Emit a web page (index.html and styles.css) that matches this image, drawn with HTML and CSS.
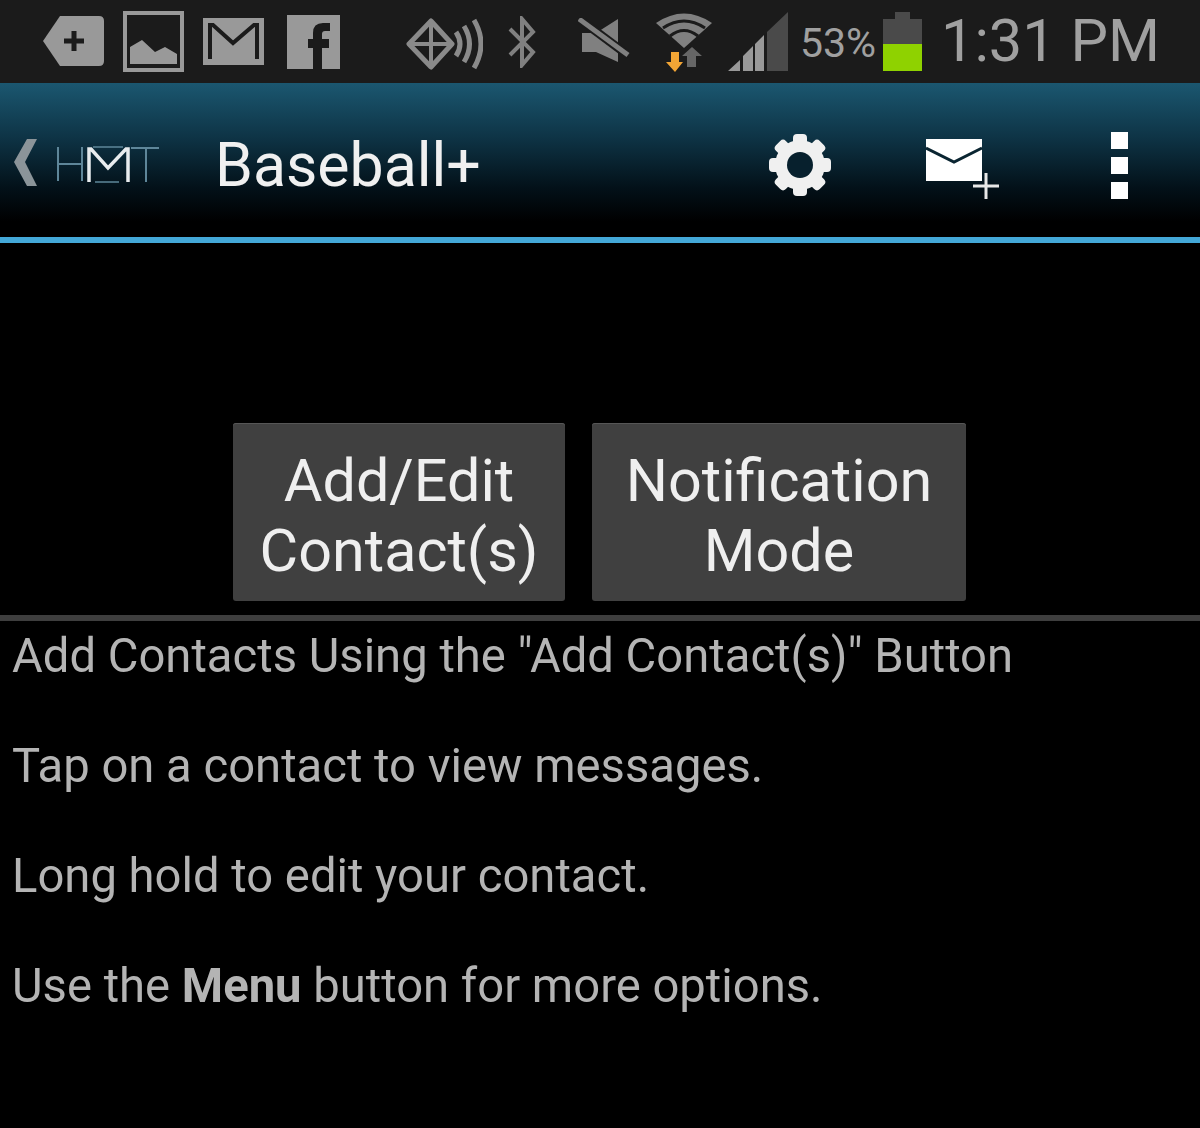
FILE: index.html
```html
<!DOCTYPE html>
<html lang="en">
<head>
  <meta charset="UTF-8" />
  <title>Baseball+</title>
  <link rel="stylesheet" href="styles.css">
</head>
<body>

  <div class="status">
    <svg class="ic-tag" viewBox="0 0 61 51">
      <path d="M17 1H56Q61 1 61 6V46Q61 51 56 51H17L0 26Z" fill="#999"/>
      <path d="M31 16V36M21 26H41" stroke="#1b1b1b" stroke-width="5"/>
    </svg>
    <svg class="ic-pic" viewBox="0 0 61 61">
      <rect x="2" y="2" width="57" height="57" fill="none" stroke="#999" stroke-width="4"/>
      <path d="M7 36L19 29L32 41L42 36L54 43V53H7Z" fill="#999"/>
    </svg>
    <svg class="ic-mail" viewBox="0 0 61 47">
      <rect width="61" height="47" fill="#999"/>
      <path d="M7 41V7H10L30 25L51 7H54V41" fill="none" stroke="#1b1b1b" stroke-width="4"/>
    </svg>
    <svg class="ic-fb" viewBox="0 0 53 54">
      <rect width="53" height="54" fill="#999"/>
      <path d="M26 54V33H21V24H26V18Q26 8 36 8H43V16H38Q35 16 35 19V24H42V33H35V54Z" fill="#1b1b1b"/>
    </svg>
    <svg class="ic-nfc" viewBox="0 0 77 52">
      <path d="M25 3L46 26L25 49L3 26Z" fill="none" stroke="#8a8a8a" stroke-width="5" stroke-linejoin="round"/>
      <path d="M25 3V49M3 26H46" stroke="#8a8a8a" stroke-width="4"/>
      <path d="M50 14Q58 26 50 38M58 8Q69 26 58 44M68 2Q82 26 68 50" fill="none" stroke="#8a8a8a" stroke-width="5"/>
    </svg>
    <svg class="ic-bt" viewBox="0 0 30 52">
      <path d="M3 13L26 36L15 49V3L26 16L3 39" fill="none" stroke="#808080" stroke-width="4"/>
    </svg>
    <svg class="ic-mute" viewBox="0 0 52 44">
      <path d="M4 15H18L40 1V44L18 34H4Z" fill="#808080"/>
      <path d="M0 0L51 38" stroke="#1b1b1b" stroke-width="9"/>
      <path d="M1 1L50 37" stroke="#808080" stroke-width="5"/>
    </svg>
    <svg class="ic-wifi" viewBox="0 0 56 60">
      <path d="M0 11Q28 -8 56 11L28 36Z" fill="#808080"/>
      <path d="M7 16Q28 2 49 16M14 24Q28 13 42 24" fill="none" stroke="#1b1b1b" stroke-width="3"/>
      <path d="M31 55V44H26L36 35L46 44H40V55Z" fill="#666"/>
      <path d="M15 40H23V50H27L19 60L10 50H15Z" fill="#f2a535"/>
    </svg>
    <svg class="ic-signal" viewBox="0 0 60 60">
      <path d="M39 20L60 0V59H39Z" fill="#4a4a4a"/>
      <path d="M0 59L12 48V59ZM15 44L25 34V59H15ZM27 32L36 23V59H27Z" fill="#999"/>
    </svg>
    <span class="pct">53%</span>
    <svg class="ic-batt" viewBox="0 0 39 59">
      <path d="M12 0H27V7H39V32H0V7H12Z" fill="#4a4a4a"/>
      <rect y="32" width="39" height="27" fill="#8fd200"/>
    </svg>
    <span class="clock">1:31 PM</span>
  </div>

  <div class="actionbar">
    <div class="home">
      <svg class="ic-back" viewBox="0 0 24 48">
        <path d="M23 0H13L0 23L13 47H23L11 23Z" fill="#8b9499"/>
      </svg>
      <svg class="logo" viewBox="0 0 103 38">
        <path d="M1 1V35M25 1V35M1 18H25" fill="none" stroke="#5e8699" stroke-width="2"/>
        <path d="M32 36V3H34L51 22L69 3H71V36" fill="none" stroke="#e8ecee" stroke-width="3.5"/>
        <path d="M36 1H66M38 36H62" stroke="#5e8699" stroke-width="1.5"/>
        <path d="M74 2H102M89 2V36" fill="none" stroke="#5e8699" stroke-width="2"/>
      </svg>
    </div>
    <div class="title">Baseball+</div>
    <svg class="ic-gear" viewBox="0 0 64 64">
      <g fill="#f0f0f0">
        <circle cx="32" cy="32" r="25"/>
        <rect x="25" y="1" width="14" height="62" rx="4"/>
        <rect x="25" y="1" width="14" height="62" rx="4" transform="rotate(45 32 32)"/>
        <rect x="25" y="1" width="14" height="62" rx="4" transform="rotate(90 32 32)"/>
        <rect x="25" y="1" width="14" height="62" rx="4" transform="rotate(135 32 32)"/>
      </g>
      <circle cx="32" cy="32" r="13" fill="#07202d"/>
    </svg>
    <svg class="ic-compose" viewBox="0 0 74 62">
      <rect y="1" width="56" height="42" fill="#fff"/>
      <path d="M0 10L28 24L56 10" fill="none" stroke="#0a2531" stroke-width="3"/>
      <path d="M47 48H73M60 35V61" stroke="#e8e8e8" stroke-width="3"/>
    </svg>
    <div class="overflow"><i></i><i></i><i></i></div>
  </div>

  <div class="btnrow">
    <div class="btn btn-add">Add/Edit<br>Contact(s)</div>
    <div class="btn btn-mode">Notification<br>Mode</div>
  </div>
  <div class="divider"></div>

  <div class="help">
    <p>Add Contacts Using the "Add Contact(s)" Button</p>
    <p>Tap on a contact to view messages.</p>
    <p>Long hold to edit your contact.</p>
    <p>Use the <b>Menu</b> button for more options.</p>
  </div>

</body>
</html>
```

FILE: styles.css
```css
body {
  margin: 0;
  background-color: #000;
  font-family: Roboto, sans-serif;
  overflow: hidden;
  filter: blur(0.5px);
}
svg {
  display: block;
  flex: none;
}

.status {
  height: 83px;
  background: #1b1b1b;
  display: flex;
  align-items: center;
  padding-left: 43px;
  color: #a0a0a0;
}
.ic-tag { width: 61px; height: 51px; margin-top: -2px; }
.ic-pic { width: 61px; height: 61px; margin-left: 19px; }
.ic-mail { width: 61px; height: 47px; margin-left: 19px; }
.ic-fb { width: 53px; height: 54px; margin-left: 23px; }
.ic-nfc { width: 77px; height: 52px; margin-left: 66px; margin-top: 5px; }
.ic-bt { width: 30px; height: 52px; margin-left: 24px; }
.ic-mute { width: 52px; height: 44px; margin-left: 41px; margin-top: -3px; }
.ic-wifi { width: 56px; height: 60px; margin-left: 26px; }
.ic-signal { width: 60px; height: 60px; margin-left: 16px; }
.pct { font-size: 41px; margin-left: 12px; width: 83px; margin-top: 2px; }
.ic-batt { width: 39px; height: 59px; margin-top: -1px; }
.clock { font-size: 59.5px; margin-left: 19px; margin-top: -1px; }

.actionbar {
  height: 154px;
  background: linear-gradient(#1b5770, #0e3446 35%, #031119 68%, #000 90%);
  border-bottom: 6px solid #44a8d8;
  display: flex;
  align-items: center;
  color: #f0f0f0;
}
.home {
  display: flex;
  align-items: center;
  width: 217px;
  padding-left: 14px;
  box-sizing: border-box;
  margin-top: 10px;
}
.ic-back { width: 24px; height: 48px; margin-top: -4px; }
.logo { width: 103px; height: 38px; margin-left: 19px; }
.title {
  font-size: 60.8px;
  width: 552px;
  margin-top: 10px;
  margin-left: -2px;
}
.ic-gear { width: 64px; height: 64px; margin-top: 10px; margin-left: 1px; }
.ic-compose { width: 74px; height: 62px; margin-left: 94px; margin-top: 18px; }
.overflow {
  display: flex;
  flex-direction: column;
  gap: 8px;
  margin-left: 111px;
  margin-top: 10px;
}
.overflow i {
  display: block;
  width: 17px;
  height: 17px;
  background: #fff;
}

.btnrow {
  display: flex;
  justify-content: center;
  gap: 27px;
  margin-top: 180px;
  padding-right: 1px;
}
.btn {
  height: 178px;
  box-sizing: border-box;
  background: #404040;
  border-radius: 3px;
  box-shadow: inset 0 1px 0 #565656;
  color: #efefef;
  font-size: 59.3px;
  line-height: 70px;
  text-align: center;
  padding-top: 23px;
}
.btn-add { width: 332px; }
.btn-mode { width: 374px; }
.divider {
  height: 6px;
  margin-top: 14px;
  background: #3e3e3e;
}

.help {
  padding-left: 12px;
  color: #b4b4b4;
  font-size: 47.2px;
  line-height: 55px;
  margin-top: 8px;
}
.help p {
  margin: 0 0 55px;
}
.help b {
  font-weight: bold;
}
```
